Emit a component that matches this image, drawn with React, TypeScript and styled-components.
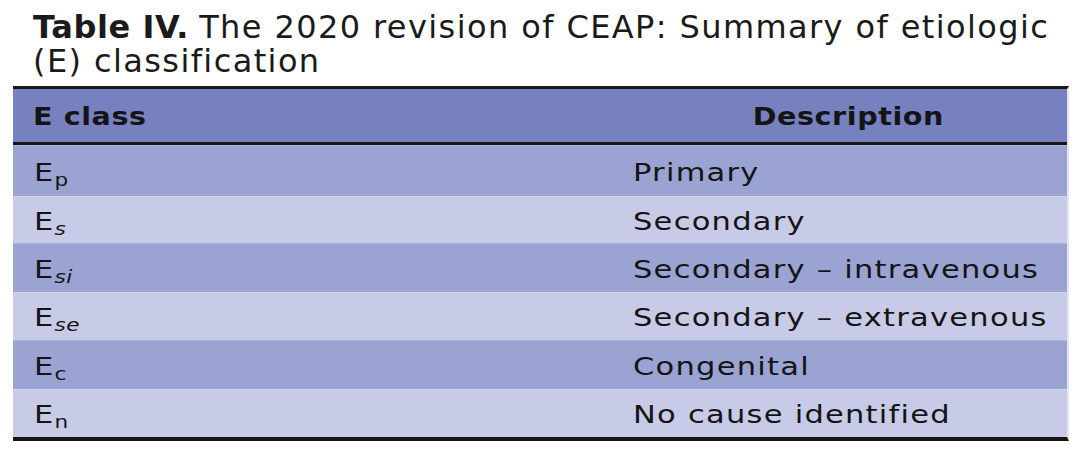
import React from "react";
import styled, { createGlobalStyle } from "styled-components";

const GlobalStyle = createGlobalStyle`
  html, body {
    margin: 0;
    padding: 0;
    background: #ffffff;
  }
  body {
    font-family: "DejaVu Sans", "Liberation Sans", sans-serif;
    color: #141414;
  }
`;

const Page = styled.div`
  width: 1080px;
  height: 456px;
  box-sizing: border-box;
  padding: 10px 11px 0 13px;
  display: flex;
  flex-direction: column;
`;

const Caption = styled.div`
  padding-left: 20px;
  font-size: 32px;
  line-height: 34px;
  letter-spacing: 1.4px;
  color: #1a1a1a;
  margin-bottom: 8px;
`;

const CaptionLine = styled.div`
  white-space: nowrap;
`;

const CaptionLabel = styled.b`
  font-weight: 700;
  letter-spacing: 0.6px;
  margin-right: 10px;
`;

const Table = styled.div`
  border-top: 3px solid #161616;
  border-bottom: 4px solid #161616;
  border-right: 2px solid #e2e4f3;
  display: flex;
  flex-direction: column;
`;

const Row = styled.div<{ $tone: "head" | "dark" | "light"; $h: number }>`
  display: grid;
  grid-template-columns: 617px 1fr;
  align-items: center;
  box-sizing: border-box;
  height: ${(p) => p.$h}px;
  background: ${(p) =>
    p.$tone === "head" ? "#7781bf" : p.$tone === "dark" ? "#9ba3d2" : "#c8cbe8"};
  border-bottom: ${(p) => (p.$tone === "head" ? "3px solid #161616" : "none")};
  border-top: ${(p) =>
    p.$tone === "head" ? "none" : "1px solid rgba(255,255,255,0.18)"};
`;

const HeadCell = styled.div<{ $center?: boolean }>`
  padding-left: ${(p) => (p.$center ? "0" : "20px")};
  text-align: ${(p) => (p.$center ? "center" : "left")};
  padding-top: 2px;
`;

const HeadText = styled.span<{ $center?: boolean }>`
  display: inline-block;
  font-weight: 700;
  font-size: 24px;
  letter-spacing: 0.5px;
  transform: scaleX(1.19);
  transform-origin: ${(p) => (p.$center ? "center" : "left")} center;
`;

const Cell = styled.div<{ $desc?: boolean }>`
  padding-left: ${(p) => (p.$desc ? "3px" : "21px")};
  padding-top: 3px;
  white-space: nowrap;
`;

const CellText = styled.span`
  display: inline-block;
  font-size: 24px;
  letter-spacing: 1px;
  transform: scaleX(1.27);
  transform-origin: left center;
`;

const Sub = styled.sub<{ $italic?: boolean }>`
  font-size: 17px;
  letter-spacing: 0.3px;
  vertical-align: -5px;
  line-height: 0;
  font-style: ${(p) => (p.$italic ? "italic" : "normal")};
`;

const rows: { sub: string; desc: string; h: number; italic?: boolean }[] = [
  { sub: "p", desc: "Primary", h: 51 },
  { sub: "s", desc: "Secondary", h: 47, italic: true },
  { sub: "si", desc: "Secondary \u2013 intravenous", h: 49, italic: true },
  { sub: "se", desc: "Secondary \u2013 extravenous", h: 48, italic: true },
  { sub: "c", desc: "Congenital", h: 49 },
  { sub: "n", desc: "No cause identified", h: 48 },
];

export default function App() {
  return (
    <>
      <GlobalStyle />
      <Page>
        <Caption>
          <CaptionLine>
            <CaptionLabel>Table IV.</CaptionLabel>
            <span>The 2020 revision of CEAP: Summary of etiologic</span>
          </CaptionLine>
          <CaptionLine>(E) classification</CaptionLine>
        </Caption>
        <Table>
          <Row $tone="head" $h={56}>
            <HeadCell>
              <HeadText>E class</HeadText>
            </HeadCell>
            <HeadCell $center>
              <HeadText $center>Description</HeadText>
            </HeadCell>
          </Row>
          {rows.map((r, i) => (
            <Row key={r.sub} $tone={i % 2 === 0 ? "dark" : "light"} $h={r.h}>
              <Cell>
                <CellText>
                  E<Sub $italic={r.italic}>{r.sub}</Sub>
                </CellText>
              </Cell>
              <Cell $desc>
                <CellText>{r.desc}</CellText>
              </Cell>
            </Row>
          ))}
        </Table>
      </Page>
    </>
  );
}
